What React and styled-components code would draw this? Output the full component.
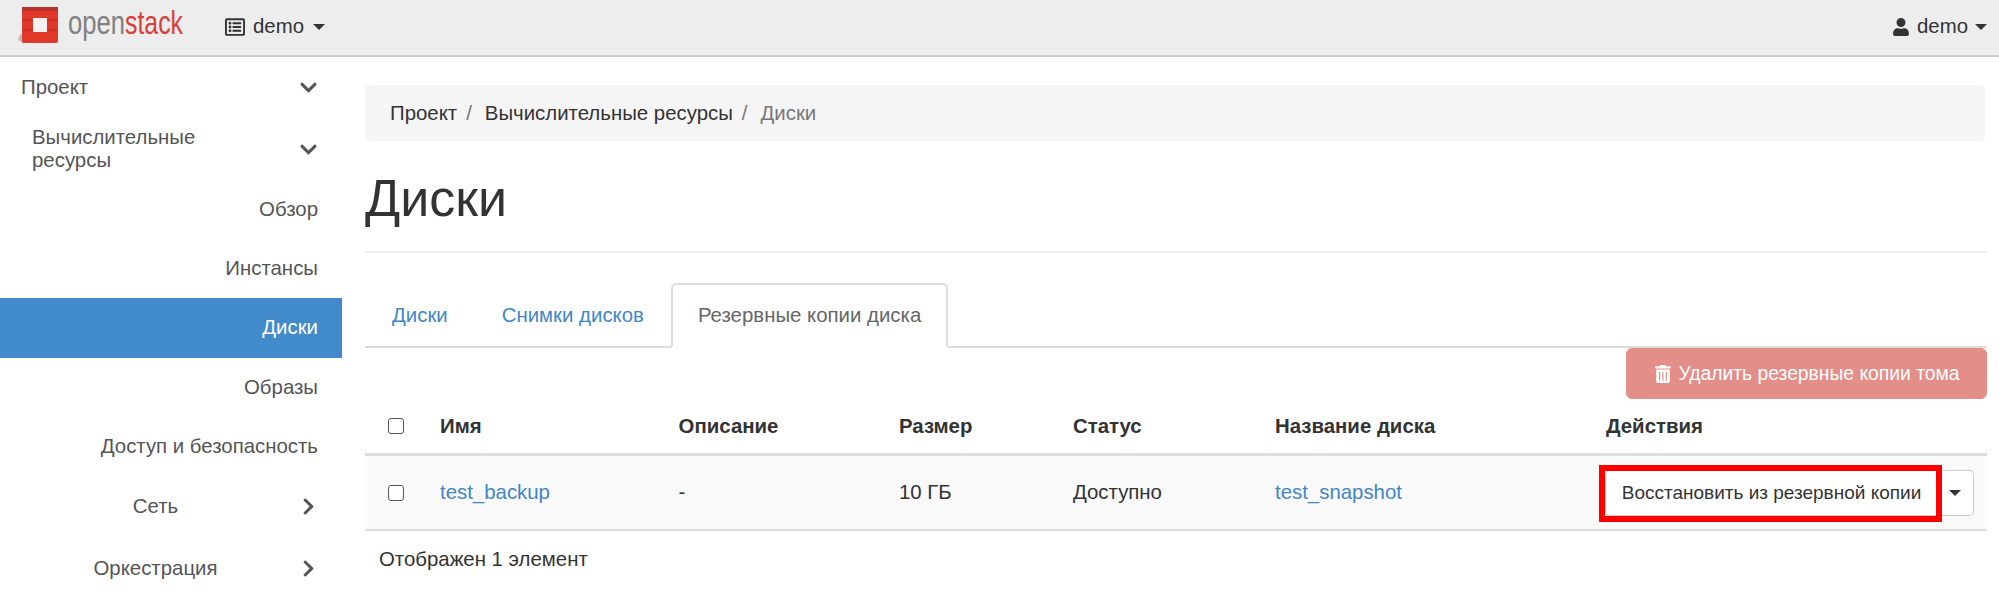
import React from "react";
import styled, { createGlobalStyle } from "styled-components";
import {
  FaChevronDown,
  FaChevronRight,
  FaRegListAlt,
  FaTrashAlt,
  FaUser,
} from "react-icons/fa";

const GlobalStyle = createGlobalStyle`
  html, body {
    margin: 0;
    height: 595px;
    overflow: hidden;
    background: #fff;
    font-family: "Liberation Sans", Arial, sans-serif;
    font-size: 20.4px;
    color: #333;
  }
  * { box-sizing: border-box; }
`;

const TopBar = styled.header`
  height: 57px;
  background: #ededed;
  border-bottom: 2px solid #ccc;
  display: flex;
  align-items: center;
  padding: 0 12px 2px 18px;
  color: #333;
`;

const ProjectPicker = styled.div`
  display: flex;
  align-items: center;
  gap: 8px;
  margin-left: 39px;
  svg { font-size: 20px; }
`;

const UserMenu = styled.div`
  display: flex;
  align-items: center;
  gap: 7px;
  margin-left: auto;
  svg { font-size: 18px; }
`;

const Caret = styled.span`
  width: 0;
  height: 0;
  margin-left: ${(p) => p.$gap || 0}px;
  border-top: 6px solid #333;
  border-left: 6px solid transparent;
  border-right: 6px solid transparent;
`;

const Body = styled.div`
  display: grid;
  grid-template-columns: 342px 1fr;
`;

const Sidebar = styled.nav`
  color: #555;
`;

const NavItem = styled.div`
  height: ${(p) => (p.$tall ? 61.5 : 59.2)}px;
  display: flex;
  align-items: center;
  padding: 0 24px 0 ${(p) => p.$indent || 21}px;
  background: ${(p) => (p.$active ? "#428bca" : "transparent")};
  color: ${(p) => (p.$active ? "#fff" : "inherit")};
`;

const NavLabel = styled.span`
  flex: 1;
  text-align: ${(p) => p.$align || "left"};
`;

const NavArrow = styled.span`
  width: 39px;
  display: flex;
  justify-content: flex-end;
  font-size: 19px;
  color: #555;
  svg { display: block; }
`;

const Main = styled.main`
  padding: 28px 12px 0 23px;
`;

const Breadcrumb = styled.div`
  height: 56px;
  display: flex;
  align-items: center;
  padding-left: 25px;
  background: #f5f5f5;
  border-radius: 5px;
  margin-right: 2px;
`;

const Crumb = styled.span`
  color: ${(p) => (p.$current ? "#777" : "#333")};
`;

const CrumbSep = styled.span`
  color: #777;
  margin: 0 13px 0 9px;
`;

const PageHeader = styled.div`
  height: 112px;
  display: flex;
  align-items: center;
  border-bottom: 2px solid #eee;
  padding-top: 3px;
`;

const Title = styled.h1`
  margin: 0;
  font-size: 52px;
  font-weight: 400;
  color: #333;
`;

const Tabs = styled.div`
  display: flex;
  margin-top: 30px;
  height: 65px;
  border-bottom: 2px solid #ddd;
`;

const Tab = styled.div`
  height: 65px;
  display: flex;
  align-items: center;
  padding: 0 25px;
  color: ${(p) => (p.$active ? "#666" : "#3f87c6")};
  background: ${(p) => (p.$active ? "#fff" : "transparent")};
  border: 2px solid ${(p) => (p.$active ? "#ddd" : "transparent")};
  border-bottom-color: ${(p) => (p.$active ? "#fff" : "transparent")};
  border-radius: 5px 5px 0 0;
`;

const Toolbar = styled.div`
  display: flex;
  justify-content: flex-end;
`;

const DangerButton = styled.button`
  height: 51px;
  width: 361px;
  display: flex;
  align-items: center;
  justify-content: center;
  gap: 7px;
  border: 1px solid #e48e8a;
  border-radius: 6px;
  background: #e48e8a;
  color: #fff;
  font: inherit;
  font-size: 19.3px;
  padding: 0;
`;

const Row = styled.div`
  display: grid;
  grid-template-columns: 62px 238.6px 220.4px 174px 202px 331px 1fr;
  align-items: center;
  height: ${(p) => p.$height}px;
  background: ${(p) => p.$bg || "transparent"};
  border-bottom: ${(p) => p.$line} solid #ddd;
`;

const Cell = styled.div`
  padding-left: 13px;
  font-weight: ${(p) => (p.$head ? 700 : 400)};
  color: ${(p) => (p.$link ? "#3f87c6" : "#333")};
`;

const CheckCell = styled.div`
  padding-left: 23px;
  display: flex;
`;

const Checkbox = styled.span`
  width: 16px;
  height: 16px;
  border: 1.5px solid #555;
  border-radius: 3px;
  background: #fff;
`;

const ActionGroup = styled.div`
  display: flex;
  margin-top: 1px;
  margin-left: -1px;
`;

const RestoreButton = styled.button`
  position: relative;
  width: 333px;
  height: 46px;
  font: inherit;
  font-size: 19px;
  color: #333;
  background: #fff;
  border: 1px solid #ccc;
  border-radius: 5px 0 0 5px;
  padding: 0;

  &::after {
    content: "";
    position: absolute;
    top: -6px;
    left: -7px;
    right: -5px;
    bottom: -7px;
    border: 6px solid #f00;
  }
`;

const CaretButton = styled.button`
  width: 36px;
  height: 46px;
  display: flex;
  align-items: center;
  justify-content: center;
  background: #fff;
  border: 1px solid #ccc;
  border-left: none;
  border-radius: 0 5px 5px 0;
  padding: 0;
`;

const Summary = styled.div`
  padding: 17px 0 0 14px;
  color: #333;
`;

const Logo = () => (
  <svg width="168" height="46" viewBox="0 0 168 46" aria-label="openstack">
    <path d="M2 30 L0 36 L6 40 L6 32 Z" fill="#bdbdbd" />
    <path
      d="M7 3 L38 3 Q40 3 40 5 L40 37 Q40 39 38 39 L7 39 Q4 39 4 37 L4 5 Q4 3 7 3 Z M15 14 L15 28 L29 28 L29 14 Z"
      fill="#e0392b"
      fillRule="evenodd"
    />
    <path d="M15 14 L29 14 L29 28 L15 28 Z" fill="#f7f2f0" />
    <path d="M4 3 L40 3 L40 7 L4 7 Z" fill="#b9342a" />
    <path d="M4 16 L15 16 M4 26 L15 26 M29 16 L40 16 M29 26 L40 26" stroke="#b52a20" strokeWidth="1.2" />
    <text x="50" y="30" fontFamily="Liberation Sans, sans-serif" fontSize="33" fill="#808080" textLength="57" lengthAdjust="spacingAndGlyphs">
      open
    </text>
    <text x="107" y="30" fontFamily="Liberation Sans, sans-serif" fontSize="33" fill="#d9403a" textLength="58" lengthAdjust="spacingAndGlyphs">
      stack
    </text>
  </svg>
);

const NAV = [
  { label: "Проект", tall: true, arrow: "down" },
  { label: "Вычислительные ресурсы", tall: true, arrow: "down", indent: 32 },
  { label: "Обзор", align: "right" },
  { label: "Инстансы", align: "right" },
  { label: "Диски", align: "right", active: true },
  { label: "Образы", align: "right" },
  { label: "Доступ и безопасность", align: "right" },
  { label: "Сеть", tall: true, arrow: "right", indent: 32, align: "center" },
  { label: "Оркестрация", tall: true, arrow: "right", indent: 32, align: "center" },
];

export default function App() {
  return (
    <>
      <GlobalStyle />
      <TopBar>
        <Logo />
        <ProjectPicker>
          <FaRegListAlt />
          demo
          <Caret $gap={1} />
        </ProjectPicker>
        <UserMenu>
          <FaUser />
          demo
          <Caret />
        </UserMenu>
      </TopBar>
      <Body>
        <Sidebar>
          {NAV.map((item) => (
            <NavItem key={item.label} $tall={item.tall} $indent={item.indent} $active={item.active}>
              <NavLabel $align={item.align}>{item.label}</NavLabel>
              {item.arrow && (
                <NavArrow>{item.arrow === "down" ? <FaChevronDown /> : <FaChevronRight />}</NavArrow>
              )}
            </NavItem>
          ))}
        </Sidebar>
        <Main>
          <Breadcrumb>
            <Crumb>Проект</Crumb>
            <CrumbSep>/</CrumbSep>
            <Crumb>Вычислительные ресурсы</Crumb>
            <CrumbSep>/</CrumbSep>
            <Crumb $current>Диски</Crumb>
          </Breadcrumb>
          <PageHeader>
            <Title>Диски</Title>
          </PageHeader>
          <Tabs>
            <Tab>Диски</Tab>
            <Tab>Снимки дисков</Tab>
            <Tab $active>Резервные копии диска</Tab>
          </Tabs>
          <Toolbar>
            <DangerButton>
              <FaTrashAlt size={18} />
              Удалить резервные копии тома
            </DangerButton>
          </Toolbar>
          <Row $height={57} $line="3px">
            <CheckCell><Checkbox /></CheckCell>
            <Cell $head>Имя</Cell>
            <Cell $head>Описание</Cell>
            <Cell $head>Размер</Cell>
            <Cell $head>Статус</Cell>
            <Cell $head>Название диска</Cell>
            <Cell $head>Действия</Cell>
          </Row>
          <Row $height={75} $line="2px" $bg="#f9f9f9">
            <CheckCell><Checkbox /></CheckCell>
            <Cell $link>test_backup</Cell>
            <Cell>-</Cell>
            <Cell>10 ГБ</Cell>
            <Cell>Доступно</Cell>
            <Cell $link>test_snapshot</Cell>
            <Cell>
              <ActionGroup>
                <RestoreButton>Восстановить из резервной копии</RestoreButton>
                <CaretButton><Caret /></CaretButton>
              </ActionGroup>
            </Cell>
          </Row>
          <Summary>Отображен 1 элемент</Summary>
        </Main>
      </Body>
    </>
  );
}
